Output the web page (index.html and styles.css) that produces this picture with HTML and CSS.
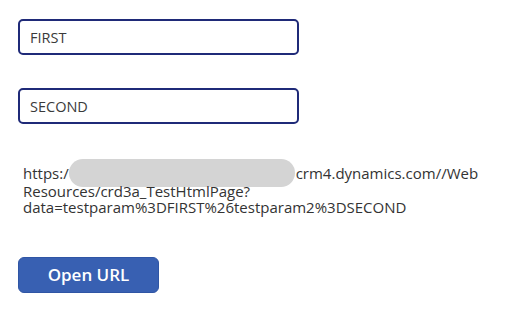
FILE: index.html
```html
<!DOCTYPE html>
<html lang="en">
<head>
    <meta charset="UTF-8">
    <title>Test Html Page</title>
    <link rel="stylesheet" href="styles.css">
</head>
<body>
    <div class="form">
        <input class="text-input" type="text" value="FIRST">
        <input class="text-input" type="text" value="SECOND">

        <div class="url-output">
            https:/<span class="redacted"></span>crm4.dynamics.com//Web<br>
            Resources/crd3a_TestHtmlPage?<br>
            data=testparam%3DFIRST%26testparam2%3DSECOND
        </div>

        <button class="open-button">Open URL</button>
    </div>
</body>
</html>
```

FILE: styles.css
```css
body {
    margin: 0;
    font-family: "Open Sans", "Noto Sans", sans-serif;
    background: #ffffff;
    color: #333333;
}

.form {
    display: flex;
    flex-direction: column;
    align-items: flex-start;
    padding: 19px 18px;
}

.text-input {
    box-sizing: border-box;
    width: 281px;
    height: 36px;
    border: 2px solid #1f2a78;
    border-radius: 5px;
    padding: 0 10px;
    font-family: inherit;
    font-size: 14.5px;
    color: #3a3a3a;
    margin-bottom: 33px;
    outline: none;
}

.url-output {
    margin: 0 0 0 5px;
    padding-top: 8px;
    font-size: 15px;
    line-height: 16px;
    color: #333333;
}

.redacted {
    display: inline-block;
    width: 226px;
    height: 28px;
    margin: -8px 1px -4px 0;
    border-radius: 14px;
    background: #d4d4d4;
    vertical-align: middle;
}

.open-button {
    margin-top: 42px;
    width: 141px;
    height: 36px;
    border: 1px solid #2f55a4;
    border-radius: 6px;
    background: #3860b2;
    color: #ffffff;
    font-family: inherit;
    font-size: 17px;
    font-weight: 600;
    cursor: pointer;
}
```
